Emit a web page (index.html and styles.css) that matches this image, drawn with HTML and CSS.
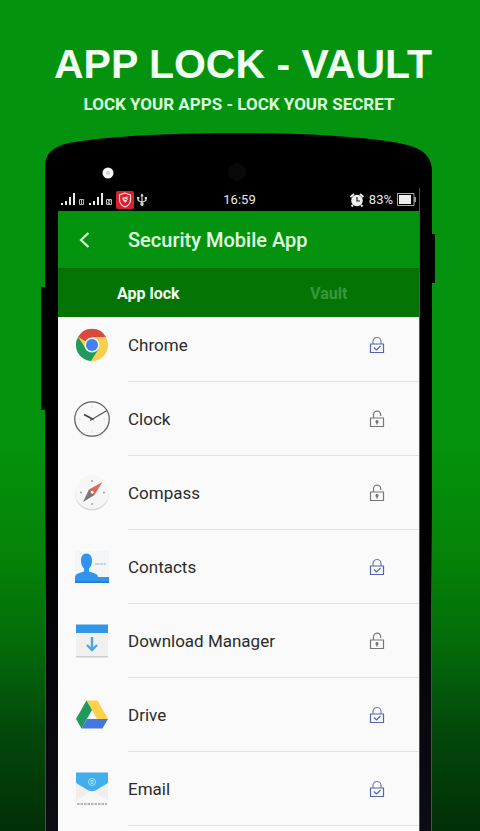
FILE: index.html
```html
<!DOCTYPE html>
<html lang="en">
<head>
<meta charset="utf-8">
<meta name="viewport" content="width=device-width, initial-scale=1">
<title>App Lock - Vault</title>
<link rel="stylesheet" href="styles.css">
</head>
<body>
<svg class="defs" aria-hidden="true">
  <defs>
    <symbol id="locked" viewBox="0 0 16 18">
      <path d="M4 8V5.500a4 4 0 0 1 8 0V8" stroke="#777da8"/>
      <path d="M1.500 8h13v8.500h-13z"/>
      <path d="M5 11.500l2.500 2.500 4-4"/>
    </symbol>
    <symbol id="unlocked" viewBox="0 0 16 18">
      <path d="M4.500 8V5a3.600 3.600 0 0 1 7.200-.5V6M1.500 8h13v8.500h-13z"/>
      <path d="M8 10.500v4" stroke-width="1.500"/>
      <circle cx="8" cy="11.500" r="1" fill="currentColor"/>
    </symbol>
  </defs>
</svg>

<header class="promo">
  <h1>APP LOCK - VAULT</h1>
  <p>LOCK YOUR APPS - LOCK YOUR SECRET</p>
</header>

<main class="phone">
  <svg class="phone-top" viewBox="0 0 387 55" preserveAspectRatio="none" aria-hidden="true">
    <path d="M0 55V34C0 20 8 14 24 10C70 2 140 0 193 0C250 0 320 3 358 11C378 15 387 24 387 38V55Z" fill="#000"/>
    <circle cx="63" cy="40" r="5.500" fill="#f4f4f4"/>
    <circle cx="63" cy="40" r="2" fill="#d2d2d2"/>
    <circle cx="192" cy="39" r="9" fill="#090909"/>
  </svg>
  <span class="side-key side-key-left"></span>
  <span class="side-key side-key-right"></span>

  <div class="body">
    <div class="screen">
      <div class="status">
        <div class="status-left">
          <svg width="26" height="16" viewBox="0 0 26 16" fill="#e8e8e8" aria-hidden="true">
            <path d="M1 11h2v2H1zM5 9h2v4H5zM9 5h2v8H9zM13 1h2v12h-2z"/>
            <path d="M19.500 7.500h4v5h-4zM21.500 8v4" fill="none" stroke="#bbb"/>
          </svg>
          <svg width="26" height="16" viewBox="0 0 26 16" fill="#e8e8e8" aria-hidden="true">
            <path d="M1 11h2v2H1zM5 9h2v4H5zM9 5h2v8H9zM13 1h2v12h-2z"/>
            <path d="M18.500 7.500h5v5h-5zM20 8.500h2v1.500h-2v1.500h2" fill="none" stroke="#bbb"/>
          </svg>
          <svg width="18" height="18" viewBox="0 0 18 18" aria-hidden="true">
            <rect width="18" height="18" rx="2" fill="#d6202d"/>
            <path d="M9 2l5.500 2v5c0 3-2 5.500-5.500 7C5.500 14.500 3.500 12 3.500 9V4z" fill="none" stroke="#ffd9d9" stroke-width="1.200"/>
            <path d="M6.500 6.500l5-1v3l-2 3.500-3-3z" fill="#ffd9d9"/>
            <path d="M8 8l2.500.5" stroke="#d6202d"/>
          </svg>
          <svg width="12" height="16" viewBox="0 0 14 16" fill="none" stroke="#d8d8d8" stroke-width="1.400" aria-hidden="true">
            <path d="M7 2v11M2.500 6v2.500l4.500 2.500 4.500-2.500V6"/>
            <path d="M7 0L5 3.500h4zM1.200 4.500h2.600V7H1.200zM10.200 4.500h2.600V7h-2.600z" fill="#d8d8d8" stroke="none"/>
            <circle cx="7" cy="13" r="1.300" fill="#d8d8d8"/>
          </svg>
        </div>
        <time>16:59</time>
        <div class="status-right">
          <svg width="16" height="16" viewBox="0 0 16 16" aria-hidden="true">
            <path d="M1.500 5L5 2M11 2l3.500 3M4 13l-1.500 1.500M12 13l1.500 1.500" stroke="#e8e8e8" stroke-width="2"/>
            <circle cx="8" cy="8.500" r="5.800" fill="#f0f0f0"/>
            <path d="M8 5v4h3" fill="none" stroke="#222" stroke-width="1.200"/>
          </svg>
          <span>83%</span>
          <svg width="20" height="14" viewBox="0 0 20 14" aria-hidden="true">
            <path d="M.5.500h16.500v12H.5z" fill="none" stroke="#aaa"/>
            <path d="M2 2h12v9H2z" fill="#eee"/>
            <path d="M17 4h2v5h-2z" fill="#999"/>
          </svg>
        </div>
      </div>

      <div class="appbar">
        <button type="button" aria-label="Back">
          <svg width="12" height="16" viewBox="0 0 12 16" aria-hidden="true"><path d="M10.500 1L3 8l7.500 7" fill="none" stroke="#d6ffd6" stroke-width="2.200"/></svg>
        </button>
        <h2>Security Mobile App</h2>
      </div>

      <nav class="tabs">
        <button type="button" class="tab active">App lock</button>
        <button type="button" class="tab">Vault</button>
      </nav>

      <div class="list">
        <ul>
          <li>
            <svg class="app" viewBox="0 0 36 36" aria-hidden="true">
              <circle cx="18" cy="18" r="16" fill="#f8cf4c"/>
              <path d="M18 18L4.100 10A16 16 0 0 1 32 10H18z" fill="#d84a3d"/>
              <path d="M4.100 10A16 16 0 0 0 17 34l7.500-12L18 18l-6.500 3z" fill="#1f9a5c"/>
              <circle cx="18" cy="18" r="7.600" fill="#f3f3ee"/>
              <circle cx="18" cy="18" r="6" fill="#4282ec"/>
            </svg>
            <span class="name">Chrome</span>
            <button type="button" class="lock on" aria-label="Unlock Chrome"><svg><use href="#locked"/></svg></button>
          </li>
          <li>
            <svg class="app" viewBox="0 0 36 36" fill="none" aria-hidden="true">
              <circle cx="18" cy="18.500" r="17" stroke="#ddd" stroke-width="2"/>
              <circle cx="18" cy="18" r="17.200" fill="#f8f8f8" stroke="#616161" stroke-width="1.200"/>
              <path d="M18 4v3M18 29v3M4 18h3M29 18h3" stroke="#dedede"/>
              <path d="M16 19.500L33 9.500" stroke="#555" stroke-width="1.200"/>
              <path d="M10 13.500l9.500 5" stroke="#444" stroke-width="1.800"/>
            </svg>
            <span class="name">Clock</span>
            <button type="button" class="lock" aria-label="Lock Clock"><svg><use href="#unlocked"/></svg></button>
          </li>
          <li>
            <svg class="app" viewBox="0 0 36 36" aria-hidden="true">
              <circle cx="18" cy="18.500" r="17" fill="#d8d8d8"/>
              <circle cx="18" cy="17" r="17" fill="#f6f6f6"/>
              <path d="M18 5v2M18 28v2M6 17.500h2M29 17.500h2" stroke="#9aa3b5" stroke-width="1.500"/>
              <path d="M28.500 7L15 14.500l5.500 5.500z" fill="#d96b5e"/>
              <path d="M9 27l6-12.500 5.500 5.500z" fill="#777"/>
              <circle cx="18.200" cy="17.200" r="2" fill="#fff" stroke="#b75e52"/>
            </svg>
            <span class="name">Compass</span>
            <button type="button" class="lock" aria-label="Lock Compass"><svg><use href="#unlocked"/></svg></button>
          </li>
          <li>
            <svg class="app" viewBox="0 0 36 36" aria-hidden="true">
              <rect x="1" y="2" width="34" height="33" rx="1" fill="#f3f5f7"/>
              <path d="M1 33v-4.500c0-4 5-4.500 9-6v-3C8 17.500 7 15 7 11.500c0-4 2-7 5.500-7s5.500 3 5.500 7-1 6-3 8v3c4 1.500 9 2 9 5.500H35v5z" fill="#3195f0"/>
              <path d="M1 32.500h34V34H1z" fill="#2379c8"/>
              <path d="M21 15h11" stroke="#b8c8da" stroke-width="1.500" stroke-dasharray="4 .5"/>
            </svg>
            <span class="name">Contacts</span>
            <button type="button" class="lock on" aria-label="Unlock Contacts"><svg><use href="#locked"/></svg></button>
          </li>
          <li>
            <svg class="app" viewBox="0 0 36 36" aria-hidden="true">
              <path d="M2 9h32v25H2z" fill="#f0f0f0"/>
              <path d="M2 33h32v1.500H2z" fill="#ccc"/>
              <path d="M2 1.500h32V10H2z" fill="#3296e8"/>
              <path d="M18 14V27M13 22l5 5 5-5" fill="none" stroke="#4ea3dc" stroke-width="2.400"/>
            </svg>
            <span class="name">Download Manager</span>
            <button type="button" class="lock" aria-label="Lock Download Manager"><svg><use href="#unlocked"/></svg></button>
          </li>
          <li>
            <svg class="app" viewBox="0 0 36 36" aria-hidden="true">
              <path d="M12.500 3.500h11L34 22H23z" fill="#fdd04b"/>
              <path d="M12.500 3.500l5.500 9.500L7.500 31.500 2 22z" fill="#1f9a5c"/>
              <path d="M13 22h21l-5.500 9.500h-21z" fill="#4478df"/>
            </svg>
            <span class="name">Drive</span>
            <button type="button" class="lock on" aria-label="Unlock Drive"><svg><use href="#locked"/></svg></button>
          </li>
          <li>
            <svg class="app" viewBox="0 0 36 36" aria-hidden="true">
              <path d="M2 12h32v23H2z" fill="#f8f7f7"/>
              <path d="M2 30l16-11 16 11V13H2z" fill="#f1eeee"/>
              <path d="M2 1.500h32v10.500L21.500 19.500q-3.500 1.500-7 0L2 12z" fill="#43aeec"/>
              <circle cx="18" cy="11" r="3.500" fill="none" stroke="#a8ddf8"/>
              <path d="M17 9.500h2v3h-2z" fill="none" stroke="#a8ddf8"/>
              <path d="M3 33h30" stroke="#b4b4b4" stroke-width="2" stroke-dasharray="2.500 1"/>
            </svg>
            <span class="name">Email</span>
            <button type="button" class="lock on" aria-label="Unlock Email"><svg><use href="#locked"/></svg></button>
          </li>
        </ul>
      </div>
    </div>
  </div>
</main>
</body>
</html>
```
FILE: styles.css
```css
* {
  box-sizing: border-box;
}

body {
  margin: 0;
  min-height: 100vh;
  display: flex;
  flex-direction: column;
  font-family: Roboto, "Liberation Sans", sans-serif;
  color: #2b2b2b;
  background: linear-gradient(#04930f 0%, #04930f 52%, #058407 66%, #046d0b 77%, #03480a 88%, #012f06 100%);
}

h1, h2, p, ul {
  margin: 0;
  padding: 0;
}

button {
  padding: 0;
  border: 0;
  background: none;
  font: inherit;
  color: inherit;
}

.defs {
  position: absolute;
  width: 0;
  height: 0;
}

.promo {
  padding: 40px 0 13px 6px;
  text-align: center;
  color: #f0fff0;
}

.promo h1 {
  font: bold 41px/48px "Liberation Sans", Arial, sans-serif;
}

.promo p {
  padding-right: 8px;
  font-size: 17px;
  font-weight: 700;
  line-height: 32px;
  color: #dcffdc;
}

.phone {
  position: relative;
  flex: 1;
  display: flex;
  flex-direction: column;
  margin: 0 10% 0 45px;
}

.phone-top {
  display: block;
  width: 100%;
  height: 55px;
}

.side-key {
  position: absolute;
  background: #030603;
}

.side-key-left {
  top: 154px;
  left: -4px;
  width: 4px;
  height: 123px;
}

.side-key-right {
  top: 101px;
  right: -3px;
  width: 3px;
  height: 49px;
}

.body {
  flex: 1;
  display: flex;
  padding: 0 11px 0 12px;
  background: linear-gradient(#000 0%, #000 50%, #0c0c14 100%);
  border: solid transparent;
  border-width: 0 1px;
  border-image: linear-gradient(#000 50%, #3b5c34 65%, #3b5c34) 1;
}

.screen {
  flex: 1;
  min-width: 0;
  border-right: 1px solid #2a5a8c;
}

.status {
  display: grid;
  grid-template-columns: 1fr auto 1fr;
  align-items: center;
  height: 23px;
  padding-left: 2px;
  font-size: 13px;
  color: #e8e8e8;
}

.status-left,
.status-right {
  display: flex;
  align-items: center;
  gap: 2px;
}

.status-right {
  justify-content: flex-end;
  gap: 4px;
  padding-right: 2px;
}

.appbar {
  display: flex;
  align-items: center;
  height: 57px;
  padding-left: 20px;
  gap: 38px;
  background: #04930f;
  color: #e2ffe2;
}

.appbar button {
  display: flex;
}

.appbar h2 {
  font-size: 20px;
  font-weight: 500;
}

.tabs {
  display: flex;
  height: 49px;
  background: #047504;
  border-top: 1px solid #056d08;
}

.tab {
  flex: 1;
  font-size: 16px;
  font-weight: 700;
  color: #37983a;
}

.tab.active {
  color: #f4fff4;
}

.list {
  overflow: hidden;
  background: #fafafa;
}

.list ul {
  margin-top: -9px;
  padding-bottom: 5px;
  list-style: none;
}

.list li {
  display: flex;
  align-items: center;
  gap: 18px;
  height: 74px;
  padding: 0 34px 0 16px;
  background: linear-gradient(#e2e2e2, #e2e2e2) 70px 100% / 100% 1px no-repeat;
}

.app {
  width: 36px;
  height: 36px;
}

.name {
  flex: 1;
  font-size: 17px;
}

.lock {
  display: flex;
  color: #777;
}

.lock.on {
  color: #5564ae;
}

.lock svg {
  width: 16px;
  height: 18px;
  fill: none;
  stroke: currentColor;
  stroke-width: 1.2;
}
```
